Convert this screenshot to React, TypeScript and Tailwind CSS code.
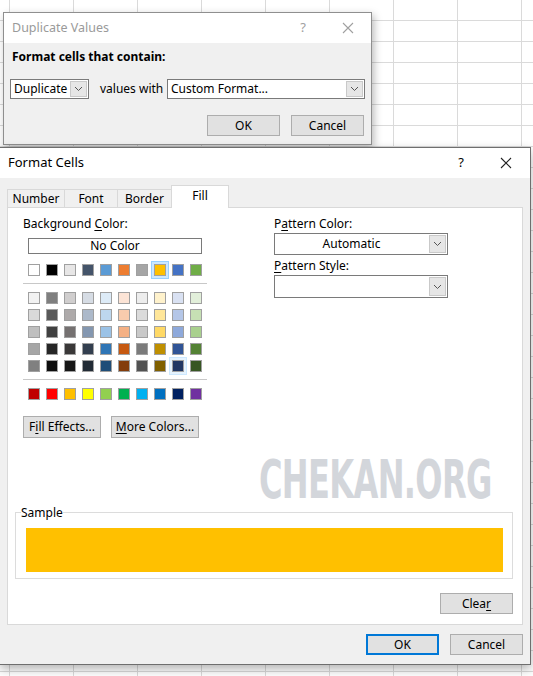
import React from "react";

const font = { fontFamily: '"Noto Sans", "Open Sans", sans-serif' };

const Chevron = () => (
  <svg width="9" height="6" viewBox="0 0 9 6" className="block">
    <path d="M1 1 L4.5 4.5 L8 1" fill="none" stroke="#555" strokeWidth="1" />
  </svg>
);

const CloseX = ({ color }: { color: string }) => (
  <svg width="12" height="12" viewBox="0 0 12 12" className="block">
    <path d="M1 1 L11 11 M11 1 L1 11" stroke={color} strokeWidth="1.1" fill="none" />
  </svg>
);

const theme = ["#FFFFFF", "#000000", "#E7E6E6", "#44546A", "#5B9BD5", "#ED7D31", "#A5A5A5", "#FFC000", "#4472C4", "#70AD47"];
const tints = [
  ["#F2F2F2", "#7F7F7F", "#D0CECE", "#D6DCE4", "#DDEBF7", "#FCE4D6", "#EDEDED", "#FFF2CC", "#D9E1F2", "#E2EFDA"],
  ["#D9D9D9", "#595959", "#AEAAAA", "#ACB9CA", "#BDD7EE", "#F8CBAD", "#DBDBDB", "#FFE699", "#B4C6E7", "#C6E0B4"],
  ["#BFBFBF", "#404040", "#757171", "#8497B0", "#9BC2E6", "#F4B084", "#C9C9C9", "#FFD966", "#8EA9DB", "#A9D08E"],
  ["#A6A6A6", "#262626", "#3A3838", "#333F4F", "#2F75B5", "#C65911", "#7B7B7B", "#BF8F00", "#305496", "#548235"],
  ["#808080", "#0D0D0D", "#161616", "#222B35", "#1F4E78", "#833C0C", "#525252", "#806000", "#203764", "#375623"],
];
const standard = ["#C00000", "#FF0000", "#FFC000", "#FFFF00", "#92D050", "#00B050", "#00B0F0", "#0070C0", "#002060", "#7030A0"];

const Swatch = ({ color, state }: { color: string; state?: "sel" | "hover" }) => (
  <div className="relative w-[12px] h-[12px]">
    {state === "sel" && (
      <div className="absolute -inset-[3px] bg-[#cce8ff] border border-[#99d1ff]" />
    )}
    {state === "hover" && (
      <div className="absolute -inset-[3px] bg-[#e5f3ff] border border-[#cce8ff]" />
    )}
    <div className="relative w-[12px] h-[12px] border border-[#a0a0a0]" style={{ backgroundColor: color }} />
  </div>
);

const Btn = ({ children, w, primary }: { children: React.ReactNode; w: string; primary?: boolean }) => (
  <div
    className={`${w} h-[21px] flex items-center justify-center bg-[#e1e1e1] text-[12px] text-black ${
      primary ? "border-2 border-[#0078d7]" : "border border-[#adadad]"
    }`}
  >
    {children}
  </div>
);

const Select = ({ w, h, text, center }: { w: string; h: string; text: string; center?: boolean }) => (
  <div className={`${w} ${h} flex bg-white border border-[#7a7a7a] text-[12px] text-black`}>
    <div className={`flex-1 flex items-center ${center ? "justify-center" : "pl-[3px]"}`}>{text}</div>
    <div className="w-[17px] m-px flex items-center justify-center bg-[#e6e6e6] border border-[#c9c9c9]">
      <Chevron />
    </div>
  </div>
);

export default function App() {
  return (
    <div
      className="relative w-[533px] h-[676px] overflow-hidden bg-white bg-[linear-gradient(to_right,#dadada_1px,transparent_1px),linear-gradient(to_bottom,#dadada_1px,transparent_1px)] bg-[size:64px_21px] bg-[position:9px_20px] pt-[12px]"
      style={font}
    >
      {/* Duplicate Values dialog */}
      <div className="ml-[3px] w-[369px] border border-[#8f8f8f] shadow-[2px_3px_8px_rgba(0,0,0,0.28)] relative z-10">
        <div className="h-[30px] bg-white flex items-center pl-[8px] pr-[17px] text-[12.5px] text-[#9a9a9a]">
          <span>Duplicate Values</span>
          <span className="ml-auto mr-[36px] text-[13px] text-[#a0a0a0]">?</span>
          <CloseX color="#a0a0a0" />
        </div>
        <div className="bg-[#f0f0f0] px-[6px] pt-[6px] pb-[8px] text-[12px] text-black">
          <div className="h-[16px] leading-[16px] font-bold pl-[2px]">Format cells that contain:</div>
          <div className="mt-[14px] flex items-center h-[20px]">
            <Select w="w-[79px]" h="h-[20px]" text="Duplicate" />
            <span className="ml-[11px]">values with</span>
            <div className="ml-auto">
              <Select w="w-[198px]" h="h-[20px]" text="Custom Format..." />
            </div>
          </div>
          <div className="mt-[16px] flex justify-end gap-[11px] pr-[1px]">
            <Btn w="w-[73px]">OK</Btn>
            <Btn w="w-[73px]">Cancel</Btn>
          </div>
        </div>
      </div>

      {/* Format Cells dialog */}
      <div className="mt-[2px] w-[531px] border-y border-r border-[#6e6e6e] shadow-[0_4px_10px_rgba(0,0,0,0.3)] relative z-20">
        <div className="h-[30px] bg-white flex items-center pl-[8px] pr-[18px] text-[13px] text-black">
          <span>Format Cells</span>
          <span className="ml-auto mr-[36px] text-[13px]">?</span>
          <CloseX color="#222" />
        </div>
        <div className="bg-[#f0f0f0] pl-[7px] pr-[7px] pt-[7px] pb-[9px] text-[12px] text-black">
          {/* tabs */}
          <div className="flex items-end h-[22px] relative z-10">
            <div className="w-[58px] h-[18px] border border-b-0 border-[#d9d9d9] flex items-center justify-center">Number</div>
            <div className="w-[54px] -ml-px h-[18px] border border-b-0 border-[#d9d9d9] flex items-center justify-center">Font</div>
            <div className="w-[55px] -ml-px h-[18px] border border-b-0 border-[#d9d9d9] flex items-center justify-center">Border</div>
            <div className="w-[58px] -ml-px h-[23px] -mb-px bg-white border border-b-0 border-[#d9d9d9] flex items-center justify-center pb-[3px]">Fill</div>
          </div>
          {/* panel */}
          <div className="relative bg-white border border-[#d9d9d9] pl-[15px] pr-[9px] pt-[8px] pb-[10px]">
            <div className="flex">
              <div className="w-[185px]">
                <div className="h-[15px] leading-[15px]">
                  Background <u className="underline-offset-2">C</u>olor:
                </div>
                <div className="mt-[7px] ml-[5px] w-[174px] h-[16px] border border-[#7a7a7a] flex items-center justify-center">
                  No Color
                </div>
                <div className="mt-[10px] ml-[5px] flex gap-[6px]">
                  {theme.map((c, i) => (
                    <Swatch key={i} color={c} state={i === 7 ? "sel" : undefined} />
                  ))}
                </div>
                <div className="mt-[7px] w-[184px] h-px bg-[#c8c8c8]" />
                <div className="mt-[8px] ml-[5px] flex flex-col gap-[5px]">
                  {tints.map((row, r) => (
                    <div key={r} className="flex gap-[6px]">
                      {row.map((c, i) => (
                        <Swatch key={i} color={c} state={r === 4 && i === 8 ? "hover" : undefined} />
                      ))}
                    </div>
                  ))}
                </div>
                <div className="mt-[7px] w-[184px] h-px bg-[#c8c8c8]" />
                <div className="mt-[8px] ml-[5px] flex gap-[6px]">
                  {standard.map((c, i) => (
                    <Swatch key={i} color={c} />
                  ))}
                </div>
                <div className="mt-[16px] flex gap-[10px]">
                  <div className="w-[78px] h-[22px] flex items-center justify-center bg-[#e1e1e1] border border-[#adadad]">
                    F<u className="underline-offset-2">i</u>ll Effects...
                  </div>
                  <div className="w-[88px] h-[22px] flex items-center justify-center bg-[#e1e1e1] border border-[#adadad]">
                    <u className="underline-offset-2">M</u>ore Colors...
                  </div>
                </div>
              </div>
              <div className="ml-[66px] w-[174px]">
                <div className="h-[15px] leading-[15px]">
                  P<u className="underline-offset-2">a</u>ttern Color:
                </div>
                <div className="mt-[2px]">
                  <Select w="w-[174px]" h="h-[22px]" text="Automatic" center />
                </div>
                <div className="mt-[3px] h-[15px] leading-[15px]">
                  <u className="underline-offset-2">P</u>attern Style:
                </div>
                <div className="mt-[2px]">
                  <Select w="w-[174px]" h="h-[23px]" text="" center />
                </div>
              </div>
            </div>

            <div
              className="absolute left-[251px] top-[245px] text-[#d3d6db] text-[54px] font-bold leading-none scale-x-[0.66] origin-left tracking-[-1px]"
              style={{ fontFamily: '"DejaVu Sans Condensed", "DejaVu Sans", sans-serif' }}
            >
              CHEKAN.ORG
            </div>

            <fieldset className="mt-[67px] -ml-[8px] w-[498px] border border-[#dcdcdc] pl-[10px] pr-[9px] pb-[6px] pt-[8px]">
              <legend className="ml-[-5px] px-0 leading-[15px] h-[15px]">Sample</legend>
              <div className="h-[44px] bg-[#FFC000]" />
            </fieldset>
            <div className="mt-[14px] flex justify-end">
              <div className="w-[73px] h-[21px] flex items-center justify-center bg-[#e1e1e1] border border-[#adadad]">
                Clea<u className="underline-offset-2">r</u>
              </div>
            </div>
          </div>
          <div className="mt-[9px] flex justify-end gap-[11px]">
            <Btn w="w-[73px]" primary>OK</Btn>
            <Btn w="w-[73px]">Cancel</Btn>
          </div>
        </div>
      </div>
    </div>
  );
}
